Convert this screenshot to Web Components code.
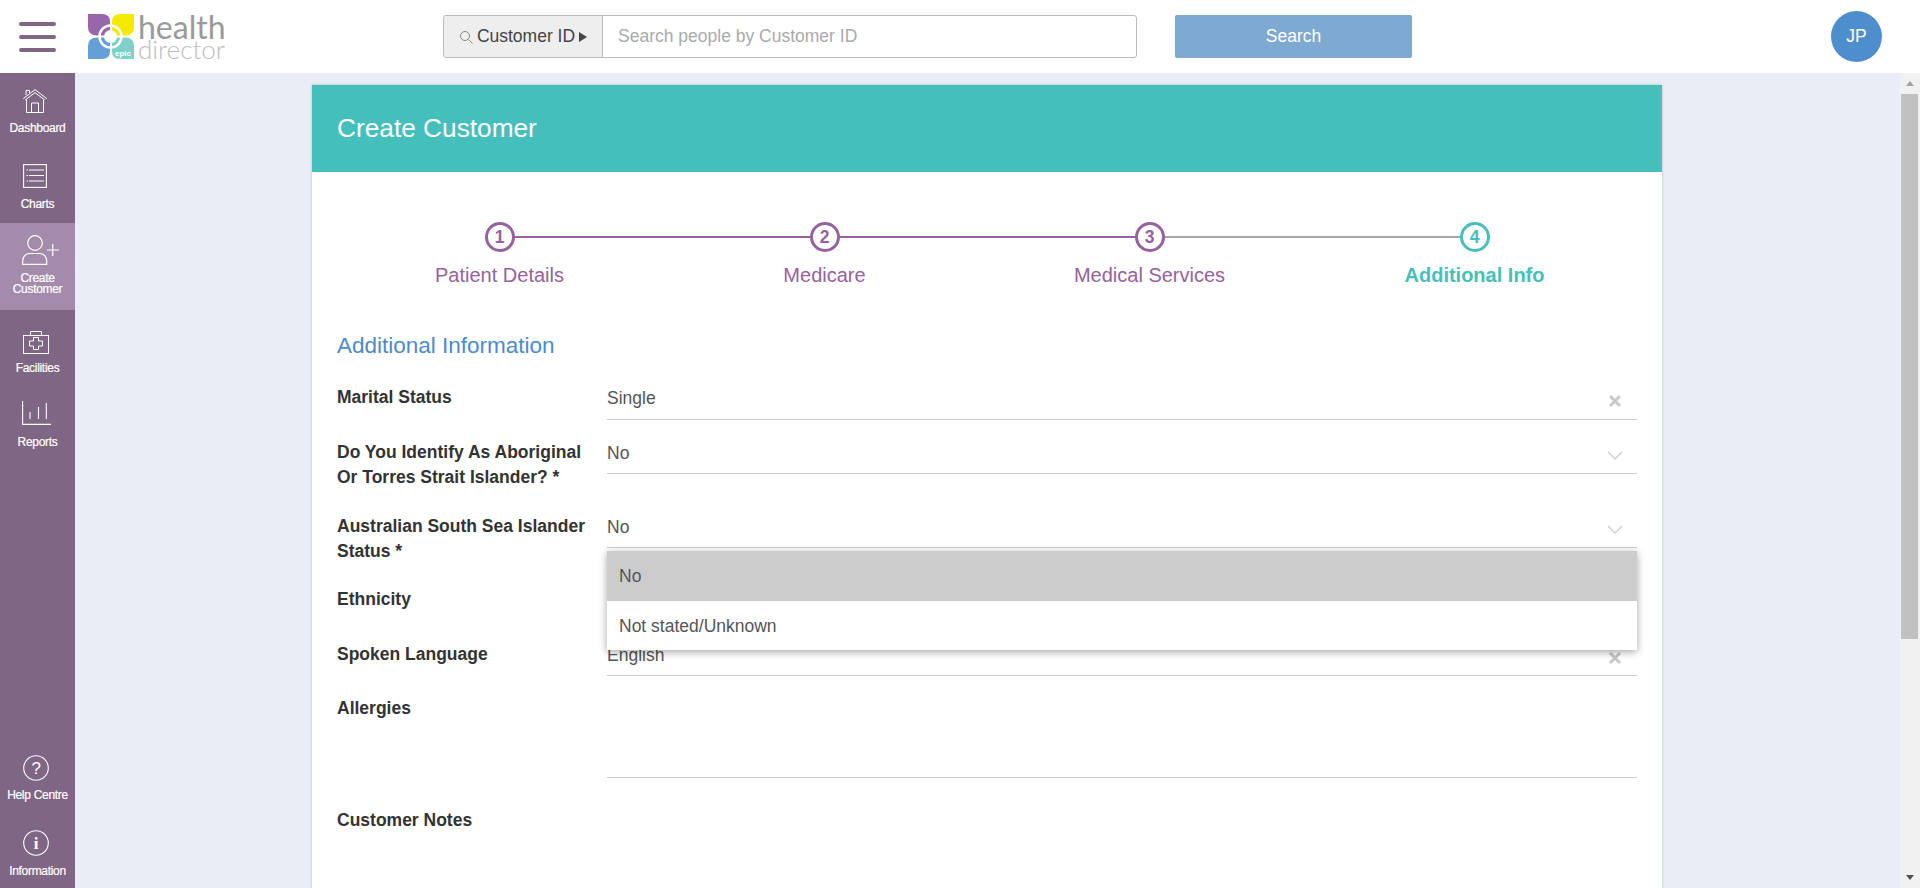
<!DOCTYPE html>
<html>
<head>
<meta charset="utf-8">
<title>Create Customer</title>
<style>
    html, body { margin: 0; height: 100%; overflow: hidden; }
    body { font-family: "Liberation Sans", Arial, sans-serif; background: #e9edf5; color: #333; }
</style>
</head>
<body>
<app-shell>
    <top-bar slot="top"></top-bar>
    <side-nav slot="side">
        <nav-item label="Dashboard" icon="home"></nav-item>
        <nav-item label="Charts" icon="charts" style="--gap:10px"></nav-item>
        <nav-item label="Create Customer" icon="person" active style="--pad:12px;--icon-h:30px;--gap:8px"></nav-item>
        <nav-item label="Facilities" icon="kit" style="--pad:19px;--gap:8px;--h:76px"></nav-item>
        <nav-item label="Reports" icon="reports" style="--pad:14px;--gap:11px"></nav-item>
        <nav-item slot="bottom" label="Help Centre" icon="help"></nav-item>
        <nav-item slot="bottom" label="Information" icon="info" style="--h:73px;--gap:10px"></nav-item>
    </side-nav>
    <customer-card>
        <step-bar></step-bar>
        <form-row label="Marital Status" value="Single" clear style="--row-h:55px;--ctl-h:35px"></form-row>
        <form-row label="Do You Identify As Aboriginal Or Torres Strait Islander? *" value="No" style="--row-h:74px;--ctl-h:34px"></form-row>
        <form-row label="Australian South Sea Islander Status *" value="No" open style="--row-h:73px;--ctl-h:34px"></form-row>
        <form-row label="Ethnicity" style="--row-h:55px;--ctl-h:34px"></form-row>
        <form-row label="Spoken Language" value="English" clear style="--row-h:54px;--ctl-h:34px"></form-row>
        <form-row label="Allergies" style="--row-h:112px;--ctl-h:82px"></form-row>
        <form-row label="Customer Notes" plain style="--row-h:200px;--ctl-h:80px"></form-row>
    </customer-card>
</app-shell>

<script>
const ICONS = {
    home: '<svg style="margin-right:5px" width="24" height="24" viewBox="0 0 24 24" fill="none" stroke="#fff" stroke-width="1"><path d="M.3 9.6 12 .6l11.700 9M2.200 11 12 3.600 21.800 11M3 6V1.500h3.500v2.300M3.500 10.500v13h17v-13M8.500 23.500V14h7v9.500"/></svg>',
    charts: '<svg style="margin-right:5px" width="24" height="24" viewBox="0 0 24 24" fill="none" stroke="#fff" stroke-width="1.100"><rect x=".6" y=".6" width="22.800" height="22.800"/><path d="M6 6h15M6 11.500h15M6 17h15M3.500 6h1.500M3.500 11.500h1.500M3.500 17h1.500"/></svg>',
    person: '<svg style="margin-left:6px" width="37" height="30" viewBox="0 0 37 30" fill="none" stroke="#fff" stroke-width="1.200"><circle cx="13" cy="8" r="7.300"/><path d="M.7 29.400V26c0-4.500 3-7.500 7-7.500h10c4 0 7 3 7 7.500v3.400z"/><path d="M25 15h12M30.700 9v12"/></svg>',
    kit: '<svg style="margin-right:3px" width="26" height="23" viewBox="0 0 26 23" fill="none" stroke="#fff" stroke-width="1"><rect x=".5" y="4.500" width="25" height="18"/><path d="M7.500 4.500V.5h11v4M10.500 6.500h5v3.500H19.500v5h-4v3.500h-5V15H6.500v-5h4z"/></svg>',
    reports: '<svg style="margin-right:2px" width="29" height="24" viewBox="0 0 29 24" fill="none" stroke="#fff" stroke-width="1.100"><path d="M.6 0v23.400H29M8 11v7M16.500 6v12M24.300 2v16"/></svg>',
    help: '<svg style="margin-right:3px" width="26" height="26" viewBox="0 0 26 26" fill="none" stroke="#fff" stroke-width="1.100"><circle cx="13" cy="13" r="12.300"/><text x="13" y="19" font-family="Liberation Sans" font-size="17" fill="#fff" stroke="none" text-anchor="middle">?</text></svg>',
    info: '<svg style="margin-right:3px" width="26" height="26" viewBox="0 0 26 26" fill="none" stroke="#fff" stroke-width="1.100"><circle cx="13" cy="13" r="12.300"/><text x="13" y="19" font-family="Liberation Serif" font-weight="700" font-size="17" fill="#fff" stroke="none" text-anchor="middle">i</text></svg>'
};

class AppShell extends HTMLElement {
    constructor() {
        super();
        this.attachShadow({ mode: 'open' });
        this.shadowRoot.innerHTML = `
            <style>
                :host { display: flex; flex-direction: column; height: 888px; overflow: hidden; }
                .body { display: flex; flex: 1; min-height: 0; }
                .content { flex: 1; min-width: 0; overflow: hidden; padding: 12px 238px 0 237px; }
                .track { width: 20px; background: #f1f1f1; flex: none; display: flex; flex-direction: column; }
                .up { width: 0; height: 0; border: 4.5px solid transparent; border-bottom: 5px solid #a3a3a3; border-top: 0; margin: 8px auto 0; flex: none; }
                .thumb { background: #c1c1c1; height: 545px; margin: 8px 2px 0 1px; flex: none; }
                .down { width: 0; height: 0; border: 4.5px solid transparent; border-top: 5px solid #505050; border-bottom: 0; margin: auto auto 8px; flex: none; }
            </style>
            <slot name="top"></slot>
            <div class="body">
                <slot name="side"></slot>
                <div class="content"><slot></slot></div>
                <div class="track"><div class="up"></div><div class="thumb"></div><div class="down"></div></div>
            </div>
        `;
    }
}

class TopBar extends HTMLElement {
    constructor() {
        super();
        this.attachShadow({ mode: 'open' });
        this.shadowRoot.innerHTML = `
            <style>
                :host { display: flex; align-items: center; height: 73px; background: #fff; flex: none; position: relative; }
                .burger { width: 37px; margin-left: 19px; display: flex; flex-direction: column; gap: 9px; }
                .burger i { display: block; height: 4px; border-radius: 2px; background: #7f6685; }
                .logo { display: flex; margin-left: 32px; width: 134px; gap: 4px; align-items: flex-start; }
                .words { display: flex; flex-direction: column; font-family: Lato, sans-serif; line-height: 1; }
                .health { font-size: 32px; color: #9a9a9a; line-height: 26px; }
                .director { font-size: 26px; font-weight: 300; color: #bdbdbd; line-height: 19px; }
                .search { display: flex; height: 43px; margin-left: 221px; width: 694px; box-sizing: border-box; border: 1px solid #bbb; border-radius: 3px; font-size: 17.5px; }
                .addon { width: 158px; flex: none; background: #eee; border-right: 1px solid #bbb; display: flex; align-items: center; justify-content: center; gap: 4px; color: #444; border-radius: 3px 0 0 3px; }
                .tri { width: 0; height: 0; border-left: 8px solid #444; border-top: 5px solid transparent; border-bottom: 5px solid transparent; }
                .ph { padding-left: 15px; display: flex; align-items: center; color: #aaa; }
                .btn { margin-left: 38px; width: 237px; height: 43px; background: #7ea9d1; color: #fff; border-radius: 2px; font-size: 17.5px; display: flex; align-items: center; justify-content: center; }
                .avatar { position: absolute; left: 1831px; top: 11px; width: 51px; height: 51px; border-radius: 50%; background: #4d8fcc; color: #fff; font-size: 17.5px; display: flex; align-items: center; justify-content: center; }
            </style>
            <div class="burger"><i></i><i></i><i></i></div>
            <div class="logo">
                <svg width="46" height="45" viewBox="0 0 46 45" style="flex:none">
                    <path d="M0 0H14Q22 0 22 8V21.500H9Q0 21.500 0 13Z" fill="#9a66ab"/>
                    <path d="M46 0H32Q24 0 24 8V21.500H37Q46 21.500 46 13Z" fill="#f4ea00"/>
                    <path d="M0 45H14Q22 45 22 37V23.500H9Q0 23.500 0 32Z" fill="#659fd8"/>
                    <path d="M46 45H32Q24 45 24 37V23.500H37Q46 23.500 46 32Z" fill="#7fd1c8"/>
                    <circle cx="22.500" cy="22.500" r="6.500" fill="#fff"/>
                    <circle cx="22.500" cy="22.500" r="11" fill="none" stroke="#fff" stroke-width="2.500"/>
                    <text x="35" y="42" font-family="Liberation Sans" font-weight="700" font-size="8" fill="#fff" text-anchor="middle">epic</text>
                </svg>
                <div class="words"><span class="health">health</span><span class="director">director</span></div>
            </div>
            <div class="search">
                <div class="addon">
                    <svg width="14" height="14" viewBox="0 0 14 14" fill="none" stroke="#888"><circle cx="6" cy="6" r="4.500"/><path d="m9.500 9.500 4 4"/></svg>
                    <span>Customer ID</span><span class="tri"></span>
                </div>
                <div class="ph">Search people by Customer ID</div>
            </div>
            <div class="btn">Search</div>
            <div class="avatar">JP</div>
        `;
    }
}

class SideNav extends HTMLElement {
    constructor() {
        super();
        this.attachShadow({ mode: 'open' });
        this.shadowRoot.innerHTML = `
            <style>
                :host { display: flex; flex-direction: column; justify-content: space-between; width: 75px; flex: none; background: #7f6685; }
                div { display: flex; flex-direction: column; }
            </style>
            <div><slot></slot></div>
            <div><slot name="bottom"></slot></div>
        `;
    }
}

class NavItem extends HTMLElement {
    constructor() {
        super();
        this.attachShadow({ mode: 'open' });
    }

    connectedCallback() {
        const active = this.hasAttribute('active');
        this.shadowRoot.innerHTML = `
            <style>
                :host { display: flex; flex-direction: column; align-items: center; height: var(--h, ${active ? 87 : 75}px); box-sizing: border-box; padding-top: var(--pad, 15px); color: #fff; font-size: 12px; line-height: 11px; text-align: center; letter-spacing: -.3px; -webkit-text-stroke: .2px #fff; background: ${active ? '#a58bab' : 'transparent'}; }
                .icon { height: var(--icon-h, 26px); display: flex; align-items: center; justify-content: center; margin-bottom: var(--gap, 9px); -webkit-text-stroke: 0; }
            </style>
            <div class="icon">${ICONS[this.getAttribute('icon')]}</div>
            <div>${this.getAttribute('label')}</div>
        `;
    }
}

class CustomerCard extends HTMLElement {
    constructor() {
        super();
        this.attachShadow({ mode: 'open' });
        this.shadowRoot.innerHTML = `
            <style>
                :host { display: block; width: 1350px; background: #fff; box-shadow: 0 0 3px rgba(0,0,0,.2); }
                .head { height: 87px; background: #45bfbc; color: #fff; font-size: 26.25px; display: flex; align-items: center; padding-left: 25px; }
                .body { padding: 0 25px; }
            </style>
            <div class="head">Create Customer</div>
            <div class="body">
                <slot></slot>
            </div>
        `;
    }
}

class StepBar extends HTMLElement {
    constructor() {
        super();
        this.attachShadow({ mode: 'open' });
        const steps = ['Patient Details', 'Medicare', 'Medical Services', 'Additional Info'];
        this.shadowRoot.innerHTML = `
            <style>
                :host { display: block; padding-top: 50px; height: 213px; box-sizing: border-box; }
                .steps { display: grid; grid-template-columns: repeat(4, 325px); }
                .step { display: flex; flex-direction: column; align-items: center; position: relative; color: #96619f; font-size: 20px; }
                .num { width: 30px; height: 30px; box-sizing: border-box; border: 3px solid #96619f; border-radius: 50%; background: #fff; font-weight: 700; font-size: 17.5px; display: flex; align-items: center; justify-content: center; margin-bottom: 12px; position: relative; }
                .line { position: absolute; left: 50%; width: 325px; top: 14px; height: 2px; background: #96619f; }
                .grey { background: #a5a5a5; }
                .last { color: #45bfbc; font-weight: 700; }
                .last .num { border-color: #45bfbc; }
                h2 { margin: 46px 0 0; font-weight: 400; font-size: 22.5px; color: #4a8ccb; line-height: 26px; }
            </style>
            <div class="steps">
                ${steps.map((s, i) => `
                    <div class="step ${i === 3 ? 'last' : ''}">
                        ${i < 3 ? `<div class="line ${i === 2 ? 'grey' : ''}"></div>` : ''}
                        <div class="num">${i + 1}</div>
                        <div>${s}</div>
                    </div>`).join('')}
            </div>
            <h2>Additional Information</h2>
        `;
    }
}

class FormRow extends HTMLElement {
    constructor() {
        super();
        this.attachShadow({ mode: 'open' });
    }

    connectedCallback() {
        const value = this.getAttribute('value') || '';
        const plain = this.hasAttribute('plain');
        const open = this.hasAttribute('open');
        const clear = this.hasAttribute('clear');
        const mark = clear
            ? '<svg width="12" height="12" viewBox="0 0 12 12" stroke="#c9c9c9" stroke-width="3"><path d="m1 1 10 10M11 1 1 11"/></svg>'
            : '<svg width="16" height="9" viewBox="0 0 16 9" fill="none" stroke="#c9c9c9" stroke-width="1.200"><path d="m1 1 7 7 7-7"/></svg>';
        this.shadowRoot.innerHTML = `
            <style>
                :host { display: flex; height: var(--row-h); font-size: 17.5px; }
                .label { width: 270px; flex: none; box-sizing: border-box; padding-right: 20px; font-weight: 700; color: #333; line-height: 25px; }
                .ctl { flex: 1; height: var(--ctl-h); box-sizing: border-box; position: relative; ${plain ? '' : 'border-bottom: 1px solid #ccc;'} display: flex; justify-content: space-between; color: #555; line-height: 25px; padding-top: 1px; }
                .mark { position: absolute; line-height: 0; right: ${clear ? 16 : 14}px; top: ${clear ? 10 : 11}px; }
                .menu { position: absolute; left: 0; right: 0; top: calc(100% + 4px); z-index: 2; background: #fff; box-shadow: 0 2px 8px rgba(0,0,0,.35); color: #555; }
                .opt { height: 48px; display: flex; align-items: center; padding-left: 12px; }
                .opt.on { height: 50px; background: #ccc; margin-bottom: 1px; }
            </style>
            <div class="label">${this.getAttribute('label')}</div>
            <div class="ctl">
                <span>${value}</span>
                ${value ? `<span class="mark">${mark}</span>` : ''}
                ${open ? '<div class="menu"><div class="opt on">No</div><div class="opt">Not stated/Unknown</div></div>' : ''}
            </div>
        `;
    }
}

customElements.define('app-shell', AppShell);
customElements.define('top-bar', TopBar);
customElements.define('side-nav', SideNav);
customElements.define('nav-item', NavItem);
customElements.define('customer-card', CustomerCard);
customElements.define('step-bar', StepBar);
customElements.define('form-row', FormRow);
</script>
</body>
</html>
